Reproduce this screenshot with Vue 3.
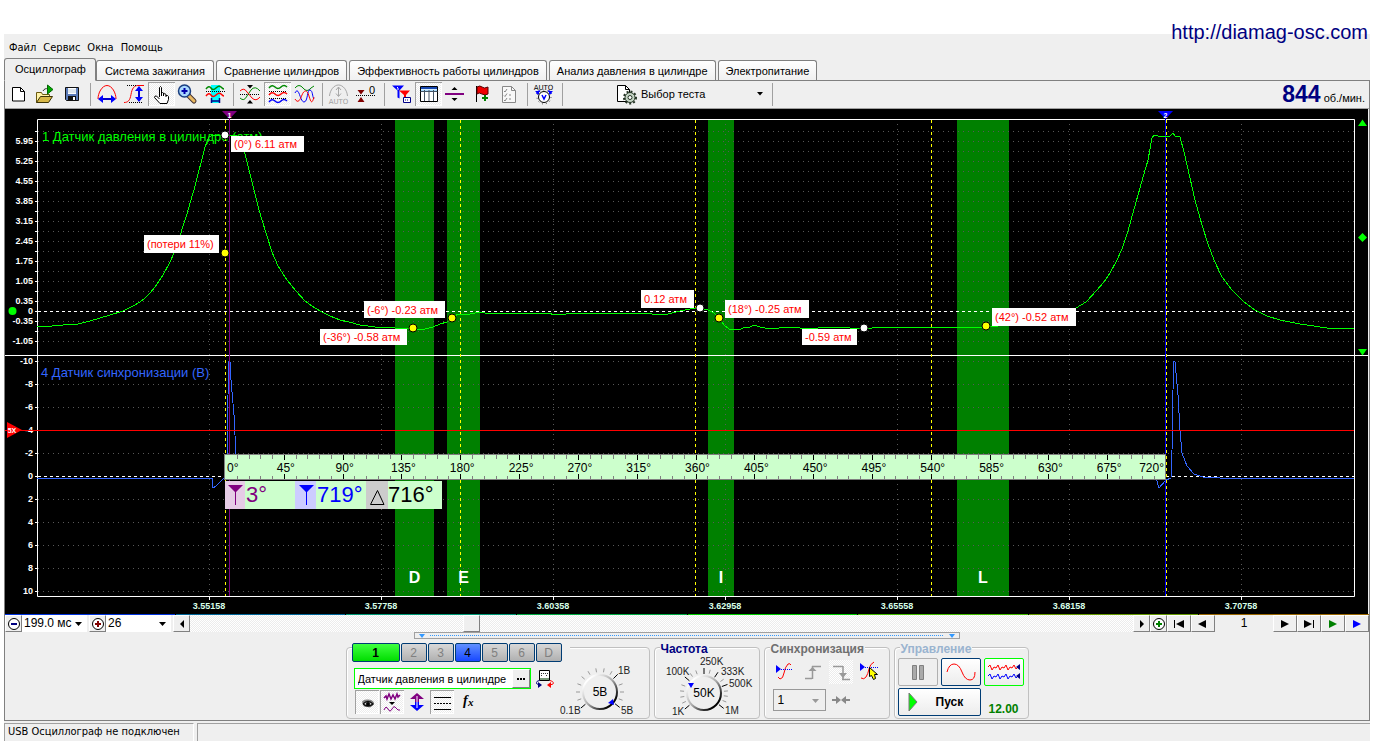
<script setup>
import { ref } from 'vue'

const menu = ['Файл', 'Сервис', 'Окна', 'Помощь']
const tabs = [
  'Осциллограф',
  'Система зажигания',
  'Сравнение цилиндров',
  'Эффективность работы цилиндров',
  'Анализ давления в цилиндре',
  'Электропитание',
]
const activeTab = ref(0)
const sensor = ref('Датчик давления в цилиндре')

const range = (from, to, step) => {
  const out = []
  for (let v = from; v <= to; v += step) out.push(v)
  return out
}

const gridTop = range(131, 341, 10).filter((y) => y !== 311)
const gridBottom = range(361, 591, 23).filter((y) => y !== 476 && y !== 430)
const gridX = range(209, 1241, 172)
const timeLabels = gridX.map((x, i) => ({ x, text: (3.55158 + i * 0.026).toFixed(5) }))

const pressureLabels = [
  ...range(0, 8, 1).map((i) => ({ y: 141 + i * 20, text: (5.95 - i * 0.7).toFixed(2) })),
  { y: 311, text: '0' },
  { y: 321, text: '-0.35' },
  { y: 341, text: '-1.05' },
]
const syncLabels = range(0, 10, 1).map((i) => ({ y: 361 + i * 23, text: String(i * 2 - 10) }))

const bands = [
  { x: 395, w: 39, name: 'D' },
  { x: 447, w: 33, name: 'E' },
  { x: 708, w: 26, name: 'I' },
  { x: 957, w: 52, name: 'L' },
]
const strokes = [225, 460, 695, 931, 1166]

const degreeX = (deg) => 225 + (deg * 941) / 720
const minorTicks = range(0, 80, 1).filter((i) => i % 5 !== 0).map((i) => Math.round(degreeX(i * 9)) + 0.5)
const majorTicks = range(1, 15, 1).map((i) => Math.round(degreeX(i * 45)) + 0.5)
const degrees = range(1, 15, 1).map((i) => ({ x: degreeX(i * 45) + 2, text: i * 45 + '°' }))

const notes = [
  { x: 231, y: 136, w: 73, h: 16, text: '(0°) 6.11 атм' },
  { x: 144, y: 235, w: 75, h: 18, text: '(потери 11%)' },
  { x: 364, y: 301, w: 81, h: 17, text: '(-6°) -0.23 атм' },
  { x: 320, y: 329, w: 87, h: 16, text: '(-36°) -0.58 атм' },
  { x: 641, y: 290, w: 53, h: 18, text: '0.12 атм' },
  { x: 725, y: 300, w: 84, h: 18, text: '(18°) -0.25 атм' },
  { x: 802, y: 329, w: 55, h: 16, text: '-0.59 атм' },
  { x: 992, y: 308, w: 84, h: 18, text: '(42°) -0.52 атм' },
]
const points = [
  { x: 225, y: 135, c: '#fff' },
  { x: 225, y: 253, c: '#ff0' },
  { x: 413, y: 328, c: '#ff0' },
  { x: 452, y: 318, c: '#ff0' },
  { x: 700, y: 308, c: '#fff' },
  { x: 719, y: 318, c: '#ff0' },
  { x: 864, y: 328, c: '#fff' },
  { x: 986, y: 326, c: '#ff0' },
]
const segments = ['#0033dd', '#006699', '#009977', '#00aa44', '#00cc00', '#44bb00', '#669900', '#996600']

const pressure =
  '37,326 52,326 63,325 78,324 82,323 90,321 100,318 110,315 123,311 133,306 140,302 145,298 150,293 155,287 163,275 170,262 175,251 180,236 183,226 187,214 190,203 194,190 205,147 209,137 213,135 225,135 237,136 244,150 248,166 254,190 259,210 266,233 272,252 278,266 287,280 296,291 305,301 312,306 320,311 330,316 340,320 349,322 360,325 375,327 395,328 413,329 425,329 433,327 440,324 447,322 452,318 458,314 470,314 480,312 490,314 510,313 520,314 545,313 558,315 575,313 590,314 610,313 625,314 640,313 652,314 668,314 680,311 690,309 700,308 708,310 714,313 719,318 724,325 729,329 739,330 743,328 750,327 754,325 760,327 770,329 788,327 800,328 812,329 824,327 850,328 864,328 872,328 890,327 905,328 920,327 935,328 950,327 986,327 1010,325 1040,321 1060,316 1076,308 1086,302 1097,290 1104,282 1110,273 1116,262 1122,249 1128,231 1136,202 1140,188 1148,160 1152,138 1154,135 1158,136 1164,136 1170,136 1173,133 1175,136 1180,137 1184,152 1190,178 1195,200 1202,225 1208,244 1214,260 1222,277 1232,290 1244,302 1255,310 1267,316 1280,320 1300,324 1327,328 1354,329'
const sync =
  '37,478 212,478 213,488 216,486 223,479 227,478 228,395 229,361 230,362 231,380 234,415 236,455 237,478 1156,478 1159,488 1166,480 1171,478 1172,450 1173,390 1174,361 1175,362 1178,395 1180,430 1182,453 1187,466 1194,474 1203,477 1220,478 1354,478'

const channels = [
  { name: '1', kind: 'main' },
  { name: '2', kind: 'off' },
  { name: '3', kind: 'off' },
  { name: '4', kind: 'blue' },
  { name: '5', kind: 'off' },
  { name: '6', kind: 'off' },
  { name: 'D', kind: 'off' },
]

const dialTicks = (cx, cy, angles, r1, r2) =>
  angles.map((a) => {
    const t = (a * Math.PI) / 180
    return {
      x1: cx + Math.cos(t) * r1,
      y1: cy + Math.sin(t) * r1,
      x2: cx + Math.cos(t) * r2,
      y2: cy + Math.sin(t) * r2,
    }
  })
const voltGray = dialTicks(44, 34, [160, 180, 200, 220, 240, 260, 280, 300, 340, 0, 20], 20, 24)
const voltBlack = dialTicks(44, 34, [140, 315, 38], 19, 25)
const freqGray = dialTicks(45, 38, [155, 170, 185, 200, 235, 250, 285, 325, 355, 8, 22], 20, 24)
const freqBlack = dialTicks(45, 38, [140, 220, 270, 304, 340, 38], 19, 25)
</script>

<template>
  <main class="screen">
    <a class="site" href="#">http://diamag-osc.com</a>
    <div class="window">
      <nav class="menu">
        <button v-for="m in menu" :key="m" type="button">{{ m }}</button>
      </nav>

      <div class="tabs" role="tablist">
        <button
          v-for="(t, i) in tabs"
          :key="t"
          type="button"
          role="tab"
          :aria-selected="i === activeTab"
          :class="['tab', { active: i === activeTab }]"
          @click="activeTab = i"
        >{{ t }}</button>
      </div>

      <section class="page">
        <div class="toolbar">
          <button type="button" aria-label="Новый">
            <svg viewBox="0 0 27 24"><path d="M7.500 5.500h8l4 4v9.500h-12z" fill="#fff" stroke="#000" /><path d="M15.500 5.500v4h4" fill="none" stroke="#000" /></svg>
          </button>
          <button type="button" aria-label="Открыть">
            <svg viewBox="0 0 27 24"><path d="M4.500 20.500v-10h5l1 2h7v3" fill="#fff3a8" stroke="#6b5a10" /><path d="M4.500 20.500l4-6h12l-4 6z" fill="#d8b848" stroke="#3c3408" /><path d="M11 9c1-2 3-3 5-2" fill="none" stroke="#333" /><path d="M15.500 3v9l5.500-4.500z" fill="#0a0" stroke="#060" /></svg>
          </button>
          <button type="button" aria-label="Сохранить">
            <svg viewBox="0 0 27 24"><path d="M6.500 5.500h13v13h-12l-1-1z" fill="#5a7ab8" stroke="#111" /><path d="M9 6h8v6H9z" fill="#fff" /><path d="M9 8h8M9 10h8" stroke="#bcd" /><path d="M9 14h8v5H9z" fill="#111" /><path d="M14 15h2v3h-2z" fill="#fff" /></svg>
          </button>
          <i class="sep"></i>
          <button type="button" aria-label="Масштаб по времени">
            <svg viewBox="0 0 27 24"><path d="M4 17C4 11 8 3.500 13 3.500S22 11 22 17" fill="none" stroke="#f00" /><path d="M7 17h12" stroke="#00c" stroke-width="2" /><path d="M4 17l5-4v8zM22 17l-5-4v8z" fill="#00f" /></svg>
          </button>
          <button type="button" aria-label="Масштаб по уровню">
            <svg viewBox="0 0 27 24"><path d="M3 20.500c4 0 6-2 7-8s3-9 7-9h6" fill="none" stroke="#f00" /><path d="M6 3.500h10M8 20.500h14" stroke="#000" stroke-dasharray="1 1" /><path d="M18 7v11" stroke="#00c" stroke-width="2" /><path d="M18 4l-4 5h8zM18 20l-4-5h8z" fill="#00f" /></svg>
          </button>
          <button type="button" class="pressed" aria-label="Рука">
            <svg viewBox="0 0 27 24"><path d="M11.500 15V5.500q1-2 2 0V11q1-1 2 0v1q1.500-1 2.500 .500v1q2-.500 2.500 1v3l-1.500 4h-7L6.500 15.500q0-2 2-1.500l3 3M13.500 11v3M15.500 12v2M18 13v2" fill="#fff" stroke="#000" /></svg>
          </button>
          <button type="button" aria-label="Лупа">
            <svg viewBox="0 0 27 24"><path d="M13 13l6 6" stroke="#433" stroke-width="5" stroke-linecap="round" /><path d="M13 13l6 6" stroke="#e8b860" stroke-width="3" stroke-linecap="round" /><circle cx="9.500" cy="9" r="6" fill="#a8d8ff" stroke="#1a3f80" stroke-width="1.500" /><path d="M9.500 6v6M6.500 9h6" stroke="#00a" stroke-width="2" /></svg>
          </button>
          <button type="button" aria-label="Участок">
            <svg viewBox="0 0 27 24"><path d="M9 3h9v18H9z" fill="#0ff" /><path d="M4 7q3-4 5-1t5 0 5-1 3 2" fill="none" stroke="#080" stroke-width="1.500" /><path d="M4 9.500h19" stroke="#000" stroke-dasharray="1 1" /><path d="M4 14q3-4 5-1t5 0 5-1 3 2" fill="none" stroke="#f00" stroke-width="1.500" /><path d="M10 19h7M9.500 16v5M17.500 16v5" stroke="#008" stroke-width="1.500" /></svg>
          </button>
          <i class="sep"></i>
          <button type="button" aria-label="Сжать">
            <svg viewBox="0 0 27 24"><path d="M3 12.500h20" stroke="#000" stroke-dasharray="1 1" /><path d="M3 16q4 4 7-2l4-6q4-5 9 1" fill="none" stroke="#080" /><path d="M3 9q4-4 7 1l5 6q4 4 8-1" fill="none" stroke="#f00" /><path d="M10 3h6l-3 3.500zM10 21.500h6l-3-3.500z" fill="#000" /></svg>
          </button>
          <button type="button" class="pressed" aria-label="Раздельно">
            <svg viewBox="0 0 27 24"><path d="M5 6q3-4 6-1t6 0 6 0" fill="none" stroke="#080" stroke-width="1.500" /><path d="M5 9.500h18M5 16.500h18" stroke="#000" stroke-dasharray="1 1" /><path d="M5 13q3-4 6-1t6 0 6 0" fill="none" stroke="#f00" stroke-width="1.500" /><path d="M5 20q3-4 6-1t6 0 6 0" fill="none" stroke="#00f" stroke-width="1.500" /></svg>
          </button>
          <button type="button" aria-label="Вместе">
            <svg viewBox="0 0 27 24"><path d="M4 6q4-5 8 0t8 0l3-2" fill="none" stroke="#080" /><path d="M4 11C8 3 9 20 13 20S16 7 19 8s2 6 4 9" fill="none" stroke="#00f" /><path d="M4 17c3 5 5 1 7-4s5-6 7 1 3 8 5 1" fill="none" stroke="#f00" /></svg>
          </button>
          <i class="sep"></i>
          <button type="button" disabled aria-label="Авто">
            <svg viewBox="0 0 27 24"><path d="M3.500 14C4 8 8 3 12.500 3S21 8 21.500 14" fill="none" stroke="#a8a8a8" /><path d="M12.500 5v9M10 8l2.500-3L15 8M10 11.500l2.500 3 2.500-3" fill="none" stroke="#a8a8a8" /><text x="12.500" y="21.500" text-anchor="middle" class="tiny gray">AUTO</text></svg>
          </button>
          <button type="button" aria-label="Ноль">
            <svg viewBox="0 0 27 24"><path d="M3 13.500h19" stroke="#000" stroke-dasharray="1 1" /><path d="M4.500 8h7L8 12.500zM4.500 20h7L8 15z" fill="#800000" /><text x="16" y="12" class="zero">0</text></svg>
          </button>
          <i class="sep"></i>
          <button type="button" aria-label="Маркеры">
            <svg viewBox="0 0 27 24"><path d="M4 3.500h12l-4.500 5v8l-2-1v-7z" fill="#00f" /><path d="M11 8.500h11l-4 4.500v5h-2v-5z" fill="#f00" /><path d="M9 5l1 1v2" stroke="#fff" fill="none" /><path d="M15.500 15.500h7v5h-7z" fill="#fff" stroke="#008" /><path d="M17 18h4" stroke="#008" stroke-dasharray="1 1" /></svg>
          </button>
          <button type="button" class="pressed" aria-label="Таблица">
            <svg viewBox="0 0 27 24"><path d="M5.500 4.500h17v15h-17z" fill="#fff" stroke="#000" /><path d="M6 5h16v2H6z" fill="#1848b0" /><path d="M6 7.500h16v2H6z" fill="#a8d8f8" /><path d="M5.500 9.500h17M9.500 8v11M14 8v11M18.500 8v11" stroke="#456" /></svg>
          </button>
          <button type="button" aria-label="Линия">
            <svg viewBox="0 0 27 24"><path d="M3 12h19" stroke="#800080" stroke-width="2" /><path d="M9.500 8h6L12.500 5zM9.500 16h6l-3 3z" fill="#000" /></svg>
          </button>
          <button type="button" aria-label="Флаг">
            <svg viewBox="0 0 27 24"><path d="M7.500 4v16" stroke="#000" /><path d="M8 5q3-2 5 0t6 0v7q-3 2-6 0t-5 0z" fill="#e00" stroke="#500" /><path d="M16 13v6M13 16h6" stroke="#008000" stroke-width="2" /></svg>
          </button>
          <button type="button" disabled aria-label="Отчёт">
            <svg viewBox="0 0 27 24"><path d="M6.500 4.500h9l4 4v12h-13z" fill="#f8f8f8" stroke="#888" /><path d="M15.500 4.500v4h4M8 9l1 1 2-3M8 13.500l1 1 2-3M8 18l1 1 2-3M13 13h2M13 17h2" fill="none" stroke="#888" /></svg>
          </button>
          <i class="sep"></i>
          <button type="button" aria-label="Автозапуск">
            <svg viewBox="0 0 27 24"><text x="12.500" y="7.500" text-anchor="middle" class="tiny">AUTO</text><circle cx="13" cy="15" r="5.500" fill="#fff" stroke="#000" /><circle cx="13" cy="15" r="7" fill="none" stroke="#444" stroke-dasharray="1 3" /><path d="M6 12q0-3 3-3M20 12q0-3-3-3M11 13l2 4 2-4" fill="none" stroke="#00f" stroke-width="1.500" /><path d="M4 9h4v4zM22 9h-4v4z" fill="#00f" /></svg>
          </button>
          <i class="sep"></i>
          <div class="test">
            <svg viewBox="0 0 22 22" class="test-icon"><path d="M1.500 2.500h8l4 4v12h-12z" fill="#fff" stroke="#000" /><path d="M9.500 2.500v4h4" fill="none" stroke="#000" /><circle cx="14" cy="14.500" r="5" fill="#c4d4c4" stroke="#243424" /><circle cx="14" cy="14.500" r="6" fill="none" stroke="#243424" stroke-width="2" stroke-dasharray="2 2" /><circle cx="14" cy="14.500" r="2" fill="#fff" stroke="#243424" /></svg>
            <select aria-label="Выбор теста"><option>Выбор теста</option></select>
            <svg viewBox="0 0 6 4" class="caret"><path d="M0 0h6L3 3.500z" /></svg>
          </div>
          <i class="sep"></i>
          <p class="rpm"><b>844</b> об./мин.</p>
        </div>

        <svg class="scope" viewBox="5 109 1364 505" role="img" aria-label="Осциллограмма">
          <rect x="5" y="109" width="1363" height="505" fill="#000" />
          <rect v-for="b in bands" :key="b.name" :x="b.x" y="120" :width="b.w" height="476" fill="#008000" />
          <g class="grid">
            <path v-for="y in gridTop" :key="'t' + y" :d="`M38 ${y + 0.5}H1354`" />
            <path v-for="y in gridBottom" :key="'b' + y" :d="`M38 ${y + 0.5}H1354`" />
            <path v-for="x in gridX" :key="'x' + x" :d="`M${x + 0.5} 124V596`" />
          </g>
          <text x="42" y="141" class="title green">1 Датчик давления в цилиндре (атм)</text>
          <text x="41" y="377" class="title blue">4 Датчик синхронизации (В)</text>
          <path d="M38 311.500H1354M38 476.500H1354" stroke="#fff" stroke-dasharray="3 3" />
          <path d="M37.500 596.500V119.500H1354.500V596.500ZM5 355.500H1368" fill="none" stroke="#fff" />
          <g stroke="#fff">
            <path v-for="y in range(131, 341, 10)" :key="'p' + y" :d="`M35 ${y + 0.5}H38`" />
            <path v-for="y in range(361, 591, 23)" :key="'s' + y" :d="`M35 ${y + 0.5}H38`" />
            <path v-for="x in gridX" :key="'g' + x" :d="`M${x + 0.5} 597V600`" />
          </g>
          <text v-for="l in pressureLabels" :key="'l' + l.y" x="33" :y="l.y + 3" class="axis end">{{ l.text }}</text>
          <text v-for="l in syncLabels" :key="'m' + l.y" x="33" :y="l.y + 3" class="axis end">{{ l.text }}</text>
          <text v-for="l in timeLabels" :key="l.x" :x="l.x" y="609" class="axis time">{{ l.text }}</text>
          <polyline :points="sync" class="trace" stroke="#3366ff" />
          <path v-for="x in strokes" :key="'k' + x" :d="`M${x + 0.5} 120V596`" stroke="#ffff00" stroke-dasharray="3 3" />
          <path d="M229.500 118V596" stroke="#800080" />
          <path d="M1165.500 118V596" stroke="#0000ff" />
          <polyline :points="pressure" class="trace" stroke="#00ff00" />
          <path d="M5 430.500H1354" stroke="#f00" />
          <path d="M222 111h15l-7.500 8z" fill="#800080" />
          <path d="M1158 111h15l-7.500 8z" fill="#0000ff" />
          <text x="229.500" y="118" class="mark">1</text>
          <text x="1165.500" y="118" class="mark">2</text>
          <path d="M7 422l15 8-15 8z" fill="#f00" />
          <text x="12" y="433" class="mark">5X</text>
          <circle cx="12.500" cy="311" r="4" fill="#00ff00" />
          <path d="M1358 126h9l-4.500-6.500zM1358 349h9l-4.500 6.500zM1362.500 233l4.500 4.500-4.500 4.500-4.500-4.500z" fill="#00ff00" />
          <text v-for="b in bands" :key="'n' + b.name" :x="b.x + b.w / 2" y="583" class="band">{{ b.name }}</text>

          <rect x="224.500" y="454.500" width="941" height="25" fill="#ccffcc" stroke="#808080" />
          <path v-for="x in minorTicks" :key="'i' + x" :d="`M${x} 455v4M${x} 479v-3`" stroke="#808080" />
          <path v-for="x in majorTicks" :key="'j' + x" :d="`M${x} 455v5M${x} 479v-5`" stroke="#000" />
          <text x="227" y="472" class="deg">0°</text>
          <text v-for="d in degrees" :key="d.text" :x="d.x" y="472" class="deg mid">{{ d.text }}</text>
          <text x="1164" y="472" class="deg end">720°</text>

          <rect x="225" y="481" width="217" height="28" fill="#ccffcc" />
          <rect x="225" y="481" width="20" height="28" fill="#e6cce6" />
          <rect x="295" y="481" width="21" height="28" fill="#ccccff" />
          <rect x="366" y="481" width="22" height="28" fill="#cccccc" />
          <path d="M228 485h15l-7 7v13h-1v-13z" fill="#800080" />
          <path d="M299 485h15l-7 7v13h-1v-13z" fill="#0000ff" />
          <path d="M377.500 490.500l6.500 14h-13.500z" fill="none" stroke="#000" />
          <text x="246" y="502" class="read" fill="#800080">3°</text>
          <text x="317" y="502" class="read" fill="#0000ff">719°</text>
          <text x="388" y="502" class="read" fill="#000">716°</text>

          <g v-for="n in notes" :key="n.text">
            <rect :x="n.x" :y="n.y" :width="n.w" :height="n.h" fill="#fff" />
            <text :x="n.x + 3" :y="n.y + n.h / 2 + 4" class="note">{{ n.text }}</text>
          </g>
          <circle v-for="p in points" :key="p.x + '-' + p.y" :cx="p.x" :cy="p.y" r="4" :fill="p.c" stroke="#000" />
        </svg>

        <div class="segments">
          <i v-for="s in segments" :key="s" :style="{ background: s }"></i>
        </div>

        <div class="transport">
          <button type="button" class="key small" aria-label="Уменьшить"><svg viewBox="0 0 14 14"><circle cx="7" cy="7" r="5.500" fill="#fff" stroke="#000" /><path d="M4 7h6" stroke="#000080" stroke-width="2" /></svg></button>
          <div class="combo"><select aria-label="Длительность"><option>199.0 мс</option></select><svg viewBox="0 0 7 4" class="caret"><path d="M0 0h7L3.500 4z" /></svg></div>
          <button type="button" class="key small" aria-label="Увеличить"><svg viewBox="0 0 14 14"><circle cx="7" cy="7" r="5.500" fill="#fff" stroke="#000" /><path d="M4 7h6M7 4v6" stroke="#800000" stroke-width="2" /></svg></button>
          <div class="combo"><select aria-label="Кадр"><option>26</option></select><svg viewBox="0 0 7 4" class="caret"><path d="M0 0h7L3.500 4z" /></svg></div>
          <button type="button" class="key small" aria-label="Влево"><svg viewBox="0 0 14 14"><path d="M9 3v8L5 7z" /></svg></button>
          <div class="track"><button type="button" class="key thumb" aria-label="Ползунок"></button></div>
          <button type="button" class="key small" aria-label="Вправо"><svg viewBox="0 0 14 14"><path d="M5 3v8l4-4z" /></svg></button>
          <button type="button" class="key small" aria-label="Добавить"><svg viewBox="0 0 14 14"><circle cx="7" cy="7" r="5.500" fill="#fff" stroke="#000" /><path d="M4 7h6M7 4v6" stroke="#008000" stroke-width="2" /></svg></button>
          <button type="button" class="key" aria-label="В начало"><svg viewBox="0 0 14 14"><path d="M2 3h1v8H2zM12 3v8L4 7z" /></svg></button>
          <button type="button" class="key" aria-label="Назад"><svg viewBox="0 0 14 14"><path d="M10 3v8L2 7z" /></svg></button>
          <output class="frame">1</output>
          <button type="button" class="key" aria-label="Вперёд"><svg viewBox="0 0 14 14"><path d="M3 3v8l8-4z" /></svg></button>
          <button type="button" class="key" aria-label="В конец"><svg viewBox="0 0 14 14"><path d="M2 3v8l8-4zM11 3h1v8h-1z" /></svg></button>
          <button type="button" class="key" aria-label="Воспроизвести"><svg viewBox="0 0 14 14"><path d="M3 3v8l8-4z" fill="#008000" /></svg></button>
          <button type="button" class="key" aria-label="Далее"><svg viewBox="0 0 14 14"><path d="M3 3v8l8-4z" fill="#0000ff" /></svg></button>
        </div>

        <div class="splitter">
          <svg viewBox="0 0 6 4"><path d="M0 0h6L3 4z" fill="#3399ff" /></svg>
          <i></i>
          <svg viewBox="0 0 6 4"><path d="M0 0h6L3 4z" fill="#3399ff" /></svg>
        </div>

        <div class="panels">
          <section class="group channel">
            <div class="channels">
              <button v-for="c in channels" :key="c.name" type="button" :class="['ch', c.kind]">{{ c.name }}</button>
            </div>
            <div class="sensor">
              <div class="sensor-box">
                <input v-model="sensor" type="text" aria-label="Датчик" />
                <button type="button" class="key" aria-label="Выбрать датчик"><svg viewBox="0 0 14 12"><path d="M3 5h2v2H3zM6 5h2v2H6zM9 5h2v2H9z" /></svg></button>
              </div>
              <svg viewBox="0 0 18 18" class="probe"><path d="M3.500 .500h10v10h-10z" fill="#fff" stroke="#000" /><path d="M5 3.500h7M5 5.500h2M10 5.500h2" stroke="#333" stroke-dasharray="1 1" /><path d="M4 8h9v2H4z" fill="#7a9a7a" /><path d="M3.500 10.500C1 11 0 12 .500 13.500L3 15" fill="none" stroke="#000080" /><path d="M14 10.500c3 1 4 2 3 3.500l-3 1" fill="none" stroke="#f00" /><path d="M6 15l-4-3v6z" fill="#000080" /><path d="M11 15l4-3v6z" fill="#f00" /></svg>
            </div>
            <div class="options">
              <button type="button" class="pressed" aria-label="Видимость"><svg viewBox="0 0 24 24"><path d="M7 12q0-2 5-2.500t7 3l-1 3-3 2-6-1z" fill="#888" /><path d="M8 14q5-5 10 0-5 4-10 0" fill="#ddd" stroke="#111" stroke-width="1.500" /><circle cx="13" cy="14" r="2" /></svg></button>
              <button type="button" class="pressed" aria-label="Фильтр"><svg viewBox="0 0 24 24"><path d="M4 8l2-2 1 3 2-5 2 5 2-4 2 4 2-5 1 3 2-2" fill="none" stroke="#800080" stroke-width="1.500" /><path d="M9 12h6l-3 3z" /><path d="M4 20q2-5 4-1t4 0 4-1 4 2" fill="none" stroke="#800080" /></svg></button>
              <button type="button" aria-label="Инверсия"><svg viewBox="0 0 24 24"><path d="M12 3l7 6h-5v3h-4V9H5z" fill="#800080" /><path d="M12 21l7-6h-5v-3h-4v3H5z" fill="#0000ff" /><path d="M12 6v12" stroke="#fff" /></svg></button>
              <button type="button" class="pressed" aria-label="Уровни"><svg viewBox="0 0 24 24"><path d="M4 7.500h17M4 19.500h17" stroke="#000" /><path d="M4 13.500h17" stroke="#000" stroke-dasharray="2 1" /></svg></button>
              <button type="button" aria-label="Функция"><svg viewBox="0 0 24 24"><text x="8" y="15" class="fx">f</text><text x="13" y="16" class="fx sub">x</text></svg></button>
            </div>
            <svg class="dial volt" viewBox="0 0 88 58" role="img" aria-label="5В">
              <defs>
                <linearGradient id="ring" x1="0" y1="0" x2="1" y2="1"><stop offset="0.150" stop-color="#fff" /><stop offset="0.500" stop-color="#aaa" /><stop offset="0.850" stop-color="#000" /></linearGradient>
              </defs>
              <path v-for="(t, i) in voltGray" :key="'g' + i" :d="`M${t.x1} ${t.y1}L${t.x2} ${t.y2}`" stroke="#999" />
              <path v-for="(t, i) in voltBlack" :key="'b' + i" :d="`M${t.x1} ${t.y1}L${t.x2} ${t.y2}`" stroke="#000" />
              <circle cx="44" cy="34" r="17" fill="#efefef" stroke="url(#ring)" stroke-width="2" />
              <path d="M58 47l-6-2 5-4z" fill="#0000ff" />
              <text x="44" y="38" text-anchor="middle" class="value">5В</text>
              <text x="62" y="16" class="cap">1В</text>
              <text x="65" y="56" class="cap">5В</text>
              <text x="4" y="56" class="cap">0.1В</text>
            </svg>
          </section>

          <section class="group freq">
            <h2 class="navy">Частота</h2>
            <svg class="dial" viewBox="0 0 96 64" role="img" aria-label="50K">
              <path v-for="(t, i) in freqGray" :key="'g' + i" :d="`M${t.x1} ${t.y1}L${t.x2} ${t.y2}`" stroke="#999" />
              <path v-for="(t, i) in freqBlack" :key="'b' + i" :d="`M${t.x1} ${t.y1}L${t.x2} ${t.y2}`" stroke="#000" />
              <circle cx="45" cy="38" r="17" fill="#efefef" stroke="url(#ring)" stroke-width="2" />
              <path d="M29 28l6 0-3 5z" fill="#0000ff" />
              <text x="45" y="42" text-anchor="middle" class="value">50K</text>
              <text x="41" y="10" class="cap">250K</text>
              <text x="7" y="20" class="cap">100K</text>
              <text x="62" y="20" class="cap">333K</text>
              <text x="70" y="32" class="cap">500K</text>
              <text x="13" y="60" class="cap">1K</text>
              <text x="66" y="59" class="cap">1M</text>
            </svg>
          </section>

          <section class="group trigger">
            <h2 class="gray-title">Синхронизация</h2>
            <div class="modes">
              <button type="button" aria-label="Уровень"><svg viewBox="0 0 24 24"><path d="M5 17l2 2q3 0 4-6t4-9q2-1 3 1" fill="none" stroke="#f00" /><path d="M3 5l5 4-5 4z" fill="#00f" /><path d="M8 9.500h12" stroke="#00f" stroke-dasharray="1 1" /></svg></button>
              <button type="button" disabled aria-label="Фронт"><svg viewBox="0 0 24 24"><path d="M4 18.500h7M11.500 19V6M11 6.500h9" fill="none" stroke="#999" stroke-width="1.500" /><path d="M7.500 11h8l-4-4z" fill="#999" /></svg></button>
              <button type="button" disabled class="lit" aria-label="Спад"><svg viewBox="0 0 24 24"><path d="M4 6.500h10M14 6v13M13 19.500h8" fill="none" stroke="#999" stroke-width="1.500" /><path d="M10 13h8l-4 5z" fill="#999" /></svg></button>
              <button type="button" aria-label="Захват"><svg viewBox="0 0 24 24"><path d="M4 18q3 2 5-1t3-8 5-7" fill="none" stroke="#f00" /><path d="M3 3l5 4-5 4z" fill="#00f" /><path d="M8 7.500h13" stroke="#00f" stroke-dasharray="1 1" /><path d="M12.500 7.500v9l2-1 2 4 2-1-1-4h3z" fill="#ff0" stroke="#000" /></svg></button>
            </div>
            <div class="source">
              <div class="disabled-combo"><select disabled aria-label="Канал синхронизации"><option>1</option></select><svg viewBox="0 0 7 4" class="caret"><path d="M0 0h7L3.500 4z" fill="#999" /></svg></div>
              <svg viewBox="0 0 18 10" class="meet"><path d="M0 4h4V1l5 4-5 4V6H0zM18 4h-4V1L9 5l5 4V6h4z" fill="#888" /></svg>
            </div>
          </section>

          <section class="group run">
            <h2 class="pale">Управление</h2>
            <div class="run-grid">
              <button type="button" class="box off" aria-label="Пауза"><svg viewBox="0 0 38 26"><path d="M13.500 6.500h4v14h-4zM20.500 6.500h4v14h-4z" fill="#aaa" stroke="#808080" /></svg></button>
              <button type="button" class="box" aria-label="Один канал"><svg viewBox="0 0 38 26"><path d="M5 13q2-8 7-8t8 8 8 8 5-8" fill="none" stroke="#f00" /></svg></button>
              <button type="button" class="box chosen" aria-label="Все каналы"><svg viewBox="0 0 38 26"><path d="M3 8l2-2 2 5 2-3 2 1 2-3 2 5 2-3 2 1 2-3 2 5 2-3 2 1 2-3 2 4 2-2" fill="none" stroke="#f00" /><path d="M3 17l2-2 2 5 2-3 2 1 2-3 2 5 2-3 2 1 2-3 2 5 2-3 2 1 2-3 2 4 2-2" fill="none" stroke="#00f" /><path d="M35 5v6l-4-3zM35 14v6l-4-3z" fill="#008" /></svg></button>
              <button type="button" class="box start"><svg viewBox="0 0 10 20"><path d="M1 1v18l8-9z" fill="#0f0" stroke="#777" /></svg>Пуск</button>
              <output class="volts">12.00</output>
            </div>
          </section>
        </div>
      </section>

      <footer class="status"><p>USB Осциллограф не подключен</p><p></p></footer>
    </div>
  </main>
</template>

<style>
body {
  background: #fff;
}
</style>

<style scoped>
.screen {
  position: relative;
  padding: 34px 12px 0 4px;
  font: 11px/14px "Liberation Sans", Arial, sans-serif;
  color: #000;
}
.screen * {
  box-sizing: border-box;
}
button,
select,
input {
  font: inherit;
  color: inherit;
  margin: 0;
  padding: 0;
  border: 0;
  background: none;
}
svg {
  display: block;
}
p,
h2 {
  margin: 0;
}
.site {
  position: absolute;
  top: 20px;
  right: 14px;
  font-size: 20px;
  line-height: 24px;
  color: #000080;
  text-decoration: none;
}
.window {
  background: #efefef;
}
.menu {
  display: flex;
  gap: 7px;
  height: 24px;
  padding: 7px 5px 0;
}
.menu button {
  height: 14px;
  font-family: "DejaVu Sans Condensed", "Noto Sans", sans-serif;
}
.tabs {
  display: flex;
  align-items: flex-end;
  height: 22px;
}
.tab {
  height: 20px;
  margin-right: 2px;
  padding: 0 7px;
  border: 1px solid #808080;
  border-width: 1px 1px 0;
  border-radius: 3px 3px 0 0;
  background: linear-gradient(#fff, #f0f0f0);
  white-space: nowrap;
}
.tab:nth-child(2) {
  padding: 0 8px;
}
.tab.active {
  position: relative;
  height: 23px;
  margin: 0 0 -1px;
  padding: 0 9px 1px 10px;
  border-bottom: 1px solid #efefef;
  background: #efefef;
}
.page {
  border: 1px solid #808080;
  border-top: 0;
  box-shadow: inset 0 1px #808080;
}
.toolbar {
  display: flex;
  align-items: center;
  height: 29px;
  border-bottom: 1px solid #a0a0a0;
}
.toolbar > button {
  width: 27px;
  height: 24px;
}
.toolbar > button svg {
  width: 27px;
  height: 24px;
}
.pressed {
  background: conic-gradient(#fff 25%, #ececec 0 50%, #fff 0 75%, #ececec 0) 0 0 / 2px 2px;
  box-shadow: inset 1px 1px #a0a0a0, inset -1px -1px #fff;
}
.sep {
  width: 8px;
  height: 23px;
  background: linear-gradient(#a0a0a0, #a0a0a0) 4px 0 / 1px 100% no-repeat;
}
.tiny {
  font: 7px "DejaVu Sans", sans-serif;
}
.gray {
  fill: #a0a0a0;
}
.zero {
  font-size: 11px;
}
.test {
  position: relative;
  display: flex;
  align-items: center;
  width: 202px;
  padding-left: 50px;
}
.test-icon {
  width: 22px;
  height: 22px;
}
.test select {
  flex: 1;
  height: 20px;
  padding-left: 3px;
  appearance: none;
}
.test .caret {
  position: absolute;
  right: 5px;
  width: 6px;
  height: 4px;
}
.rpm {
  display: flex;
  align-items: baseline;
  gap: 3px;
  margin-left: auto;
  padding-right: 4px;
}
.rpm b {
  font-size: 23px;
  line-height: 26px;
  color: #000080;
}
.scope {
  width: 100%;
  height: auto;
}
.scope text {
  font-family: "Liberation Sans", Arial, sans-serif;
}
.trace {
  fill: none;
  shape-rendering: crispEdges;
}
.grid path {
  stroke: #585858;
  stroke-dasharray: 1 4;
}
.title {
  font-size: 13px;
}
.title.green {
  fill: #00ff00;
}
.title.blue {
  fill: #3366ff;
}
.axis {
  font-size: 9px;
  font-weight: bold;
  fill: #fff;
}
.end {
  text-anchor: end;
}
.axis.time {
  text-anchor: middle;
  fill: #d8ffe8;
}
.mark {
  font-size: 7px;
  font-weight: bold;
  text-anchor: middle;
  fill: #fff;
}
.band {
  font-size: 16px;
  font-weight: bold;
  text-anchor: middle;
  fill: #fff;
}
.deg {
  font-size: 12px;
}
.mid {
  text-anchor: middle;
}
.read {
  font-size: 22px;
}
.note {
  font-size: 11px;
  fill: #ff0000;
}
.segments {
  display: flex;
  gap: 1px;
  height: 1px;
  background: #000;
}
.segments i {
  flex: 1;
}
.transport {
  display: flex;
  height: 17px;
}
.key {
  display: flex;
  align-items: center;
  justify-content: center;
  width: 24px;
  background: #efefef;
  border: 1px solid;
  border-color: #fff #808080 #808080 #fff;
}
.key svg {
  width: 14px;
  height: 14px;
}
.key.small {
  width: 17px;
}
.combo {
  position: relative;
  width: 65px;
  margin-right: 2px;
  background: #fff;
}
.combo select {
  width: 100%;
  height: 16px;
  padding-left: 2px;
  appearance: none;
  font-size: 12px;
}
.combo .caret {
  position: absolute;
  top: 7px;
  right: 5px;
  width: 7px;
  height: 4px;
}
.track {
  flex: 1;
  background: conic-gradient(#fff 25%, #ececec 0 50%, #fff 0 75%, #ececec 0) 0 0 / 2px 2px;
}
.thumb {
  width: 17px;
  height: 17px;
  margin-left: 29%;
}
.frame {
  width: 58px;
  text-align: center;
  line-height: 17px;
  font-size: 12px;
}
.splitter {
  display: flex;
  align-items: center;
  gap: 5px;
  width: 40%;
  height: 7px;
  margin: 0 auto;
  padding: 0 4px;
  border: 1px solid #a0a0a0;
}
.splitter svg {
  width: 6px;
  height: 4px;
}
.splitter i {
  flex: 1;
  height: 1px;
  background: repeating-linear-gradient(90deg, #3399ff 0 1px, transparent 1px 2px);
}
.panels {
  display: flex;
  justify-content: center;
  gap: 4px;
  padding: 8px 0 1px;
}
.group {
  height: 72px;
  border: 1px solid #c0c0c0;
  border-radius: 4px;
  box-shadow: inset 1px 1px #fff;
}
.group h2 {
  width: max-content;
  margin: -6px 0 0 5px;
  padding: 0 1px;
  background: #efefef;
  font-size: 12px;
  line-height: 14px;
}
.navy {
  color: #000080;
}
.gray-title {
  color: #707070;
}
.pale {
  color: #9ab4d0;
}
.channel {
  display: grid;
  grid-template-columns: 205px 1fr;
  grid-template-rows: 19px 23px 24px;
  width: 304px;
}
.channels {
  grid-column: 1 / 3;
  display: flex;
  gap: 1px;
  width: 223px;
  height: 19px;
  margin-top: -5px;
  padding-left: 5px;
  background: linear-gradient(#efefef, #efefef) 5px 0 / 100% 100% no-repeat;
}
.ch {
  width: 26px;
  height: 19px;
  border: 1px solid #003c74;
  border-radius: 2px;
  background: linear-gradient(#d8d8d8, #b0b0b0);
  color: #808080;
  font-size: 12px;
}
.ch.main {
  width: 48px;
  background: linear-gradient(#40ff40, #00dd00);
  color: #000;
  font-weight: bold;
}
.ch.blue {
  background: linear-gradient(#6090ff, #1848ff);
  color: #000;
}
.sensor {
  display: flex;
  align-items: center;
  gap: 5px;
  padding-left: 7px;
}
.sensor-box {
  display: flex;
  flex: none;
  width: 177px;
  height: 21px;
  border: 1px solid #00ff00;
  background: #fff;
}
.sensor-box input {
  flex: 1;
  min-width: 0;
  padding-left: 3px;
  outline: 0;
}
.sensor-box .key {
  width: 18px;
}
.probe {
  flex: none;
  width: 18px;
  height: 18px;
}
.options {
  display: flex;
  gap: 1px;
  padding-left: 8px;
}
.options button,
.options svg {
  width: 24px;
  height: 24px;
}
.fx {
  font: italic bold 14px "Liberation Serif", serif;
}
.fx.sub {
  font-size: 11px;
}
.dial {
  width: 96px;
  height: 64px;
}
.dial.volt {
  grid-column: 2;
  grid-row: 2 / 4;
  width: 88px;
  height: 58px;
  margin-top: -9px;
  margin-left: 4px;
}
.value {
  font-size: 12px;
}
.cap {
  font-size: 10px;
  fill: #222;
}
.freq {
  width: 106px;
}
.freq .dial {
  margin: -1px 0 0 4px;
}
.trigger {
  width: 126px;
}
.modes {
  display: flex;
  gap: 4px;
  padding: 4px 0 0 8px;
}
.modes button,
.modes svg {
  width: 24px;
  height: 24px;
}
.lit {
  background: conic-gradient(#fff 25%, #ececec 0 50%, #fff 0 75%, #ececec 0) 0 0 / 2px 2px;
}
.source {
  display: flex;
  align-items: center;
  gap: 6px;
  padding: 5px 0 0 8px;
}
.disabled-combo {
  position: relative;
  width: 53px;
  height: 22px;
  border: 1px solid #999;
}
.disabled-combo select {
  width: 100%;
  height: 20px;
  padding-left: 4px;
  appearance: none;
  color: #000;
  opacity: 1;
  font-size: 12px;
}
.disabled-combo .caret {
  position: absolute;
  top: 9px;
  right: 6px;
  width: 7px;
  height: 4px;
}
.meet {
  width: 18px;
  height: 10px;
}
.run {
  width: 135px;
}
.run-grid {
  display: grid;
  grid-template-columns: 40px 40px 40px;
  gap: 2px 3px;
  padding: 2px 0 0 3px;
}
.box {
  height: 28px;
  border: 1px solid #003c74;
  border-radius: 2px;
  background: linear-gradient(#fff, #ececec);
}
.box svg {
  width: 38px;
  height: 26px;
}
.box.off {
  border-color: #b0b0b0;
  background: #efefef;
}
.box.chosen {
  border: 1px solid #00ff00;
}
.box.start {
  grid-column: 1 / 3;
  display: flex;
  align-items: center;
  gap: 18px;
  padding-left: 9px;
  font-size: 12px;
  font-weight: bold;
}
.box.start svg {
  width: 10px;
  height: 20px;
}
.volts {
  align-self: end;
  text-align: center;
  font-size: 12px;
  font-weight: bold;
  color: #008000;
}
.status {
  display: flex;
  gap: 3px;
  height: 20px;
  padding-top: 2px;
}
.status p {
  height: 18px;
  padding: 1px 3px;
  border: 1px solid #a0a0a0;
  border-width: 1px 0 0 1px;
  font-family: "DejaVu Sans Condensed", "Noto Sans", sans-serif;
}
.status p:first-child {
  width: 190px;
  border-right: 1px solid #fff;
  white-space: nowrap;
}
.status p:last-child {
  flex: 1;
}
</style>
